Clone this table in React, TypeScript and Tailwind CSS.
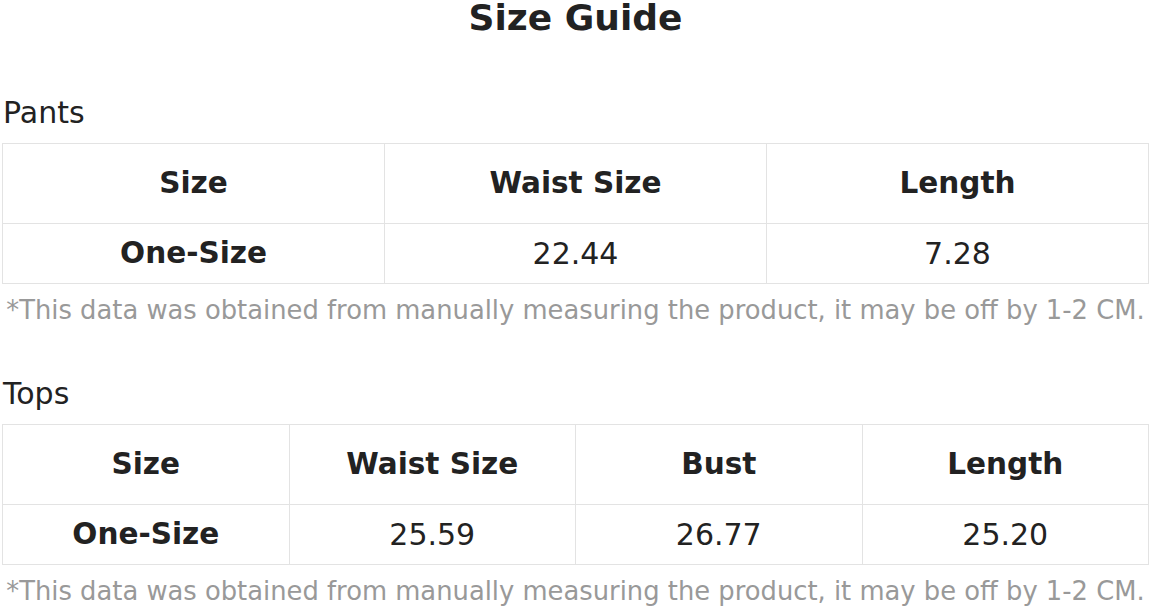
const pants = { headers: ["Size", "Waist Size", "Length"], row: ["One-Size", "22.44", "7.28"] };
const tops = { headers: ["Size", "Waist Size", "Bust", "Length"], row: ["One-Size", "25.59", "26.77", "25.20"] };

function SizeTable({ title, headers, row }: { title: string; headers: string[]; row: string[] }) {
  return (
    <section>
      <h2 className="h-[42px] pl-[1px] pt-[2px] text-[30px] leading-[40px]">{title}</h2>
      <table className="mt-[10px] w-full table-fixed border-collapse">
        <thead>
          <tr>
            {headers.map((h) => (
              <th key={h} className="h-[80px] border border-[#e3e3e3] text-[29.5px] font-bold">
                {h}
              </th>
            ))}
          </tr>
        </thead>
        <tbody>
          <tr>
            {row.map((c, i) => (
              <td
                key={i}
                className={`h-[60px] border border-[#e3e3e3] text-center ${i === 0 ? "text-[29.5px] font-bold" : "text-[30px]"}`}
              >
                {c}
              </td>
            ))}
          </tr>
        </tbody>
      </table>
      <p className="mt-[8px] whitespace-nowrap text-center text-[25.8px] leading-[36px] text-[#999]">
        *This data was obtained from manually measuring the product, it may be off by 1-2 CM.
      </p>
    </section>
  );
}

export default function App() {
  return (
    <div className="bg-white px-[2px] text-[#222]" style={{ fontFamily: '"DejaVu Sans", sans-serif' }}>
      <h1 className="h-[40px] text-center text-[36px] font-bold leading-[36px]">Size Guide</h1>
      <div className="mt-[51px]">
        <SizeTable title="Pants" {...pants} />
      </div>
      <div className="mt-[44px]">
        <SizeTable title="Tops" {...tops} />
      </div>
    </div>
  );
}
